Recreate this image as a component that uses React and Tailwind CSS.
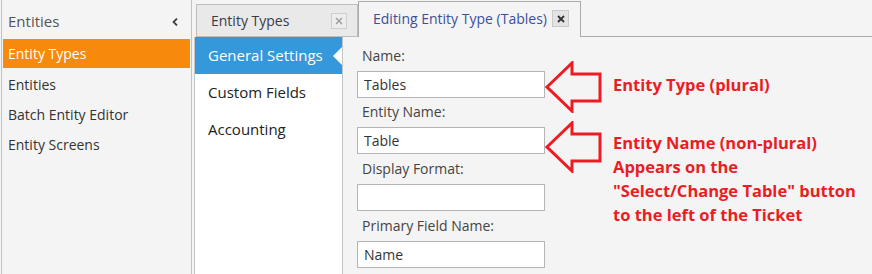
import React from "react";

const ui = { fontFamily: '"Open Sans", "Noto Sans", sans-serif' };

function CloseBox({ dark }) {
  return (
    <span
      className={
        dark
          ? "flex h-[17px] w-[17px] shrink-0 items-center justify-center border border-[#c9c9c9] bg-[#e3e3e3]"
          : "flex h-[16px] w-[16px] shrink-0 items-center justify-center border border-[#cfcfcf] bg-[#ededed]"
      }
    >
      <svg width="8" height="8" viewBox="0 0 8 8">
        <path
          d="M1 1 L7 7 M7 1 L1 7"
          stroke={dark ? "#333" : "#9a9a9a"}
          strokeWidth={dark ? 1.8 : 1.4}
        />
      </svg>
    </span>
  );
}

function Arrow() {
  return (
    <svg width="58" height="52" viewBox="0 0 58 52" className="shrink-0">
      <polygon
        points="2,26 27,2 27,13 55,13 55,40 27,40 27,50"
        fill="none"
        stroke="#ed1c24"
        strokeWidth="3"
        strokeLinejoin="miter"
      />
    </svg>
  );
}

function Field({ label, value, gap }) {
  return (
    <div className={gap}>
      <div className="h-[20px] pl-[5px] text-[14px] leading-[20px] text-[#444]">{label}</div>
      <div className="mt-[5px] flex h-[27px] w-[188px] items-center border border-[#b5b5b5] bg-white pl-[6px] text-[14px] text-[#333]">
        {value}
      </div>
    </div>
  );
}

export default function App() {
  const leftItems = ["Entities", "Batch Entity Editor", "Entity Screens"];
  return (
    <div className="flex h-[274px] w-[872px] overflow-hidden bg-[#f4f4f4]" style={ui}>
      {/* left module panel */}
      <div className="ml-px flex w-[191px] shrink-0 flex-col border-x border-[#c2c2c2] bg-[#f4f4f4] px-[1px]">
        <div className="flex h-[39px] items-center justify-between pl-[5px] pr-[12px] pt-[4px] text-[15px] text-[#555]">
          <span>Entities</span>
          <svg width="6" height="8" viewBox="0 0 6 8">
            <path d="M5 0.5 L1.5 4 L5 7.5" fill="none" stroke="#444" strokeWidth="1.8" />
          </svg>
        </div>
        <div className="flex h-[29px] items-center bg-[#f7890d] pl-[5px] text-[14px] text-white">
          Entity Types
        </div>
        {leftItems.map((t) => (
          <div key={t} className="flex h-[30px] items-center pl-[5px] pt-[2px] text-[14px] text-[#333]">
            {t}
          </div>
        ))}
      </div>

      {/* document area */}
      <div className="ml-[2px] flex flex-1 flex-col">
        <div className="flex h-[37px] items-end">
          <div className="ml-[2px] flex h-[33px] w-[162px] items-center justify-between border border-[#bdbdbd] bg-[#e9e9e9] pl-[14px] pr-[10px] text-[14px] text-[#3a3a48]">
            <span>Entity Types</span>
            <CloseBox />
          </div>
          <div className="flex h-[36px] w-[223px] items-center justify-between border-x border-t border-[#ababab] bg-[#f4f4f4] pb-[2px] pl-[14px] pr-[11px] text-[14px] text-[#3c4f9c]">
            <span className="whitespace-nowrap">Editing Entity Type (Tables)</span>
            <CloseBox dark />
          </div>
          <div className="h-[36px] flex-1 border-b border-[#ababab]" />
        </div>

        <div className="flex flex-1">
          {/* settings nav */}
          <div className="w-[149px] shrink-0 border-x border-[#c4c4c4] bg-white">
            <div className="relative flex h-[37px] items-center bg-[#3598db] pl-[13px] text-[15px] text-white">
              General Settings
              <span className="absolute right-0 top-[10px] h-0 w-0 border-y-[9px] border-r-[9px] border-y-transparent border-r-white" />
            </div>
            <div className="flex h-[37px] items-center pl-[13px] text-[15px] text-[#222]">Custom Fields</div>
            <div className="flex h-[37px] items-center pl-[13px] text-[15px] text-[#222]">Accounting</div>
          </div>

          {/* form */}
          <div className="flex flex-1">
            <div className="w-[202px] shrink-0 pl-[14px] pt-[9px]">
              <Field label="Name:" value="Tables" />
              <Field label="Entity Name:" value="Table" gap="mt-[4px]" />
              <Field label="Display Format:" value="" gap="mt-[5px]" />
              <Field label="Primary Field Name:" value="Name" gap="mt-[5px]" />
            </div>

            <div className="flex flex-col pt-[24px] font-bold text-[#ed1c24]">
              <div className="flex items-center">
                <Arrow />
                <span className="-mt-[4px] ml-[10px] text-[16.5px]">Entity Type (plural)</span>
              </div>
              <div className="mt-[8px] flex items-start">
                <Arrow />
                <div className="ml-[10px] mt-[10px] text-[16.5px] leading-[24px]">
                  <div>Entity Name (non-plural)</div>
                  <div>Appears on the</div>
                  <div>"Select/Change Table" button</div>
                  <div>to the left of the Ticket</div>
                </div>
              </div>
            </div>
          </div>
        </div>
      </div>
    </div>
  );
}
